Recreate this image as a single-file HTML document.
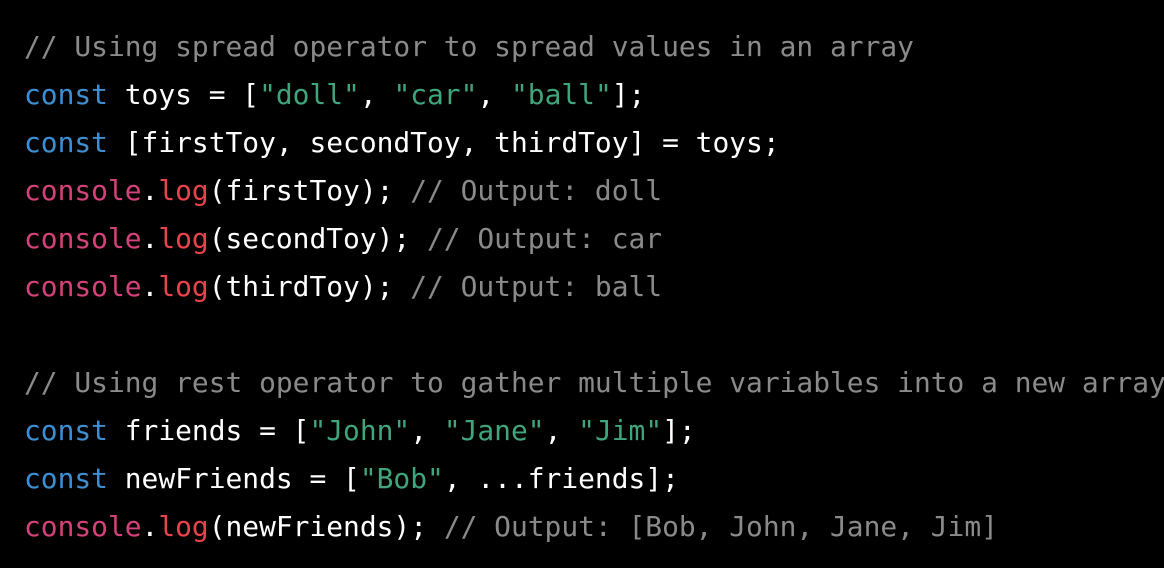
<!DOCTYPE html>
<html><head><meta charset="utf-8"><style>
html,body{margin:0;padding:0;background:#000;width:1164px;height:568px;overflow:hidden}
pre{margin:0;padding:23px 0 0 24px;font-family:"DejaVu Sans Mono","Liberation Mono",monospace;font-size:27.9px;line-height:48px;color:#fff;white-space:pre}
.c{color:#8a8a8a}.k{color:#3d8fd1}.s{color:#3fa57c}.o{color:#d3427a}.l{color:#e9434c}
</style></head><body><pre><span class="c">// Using spread operator to spread values in an array</span>
<span class="k">const</span> toys = [<span class="s">"doll"</span>, <span class="s">"car"</span>, <span class="s">"ball"</span>];
<span class="k">const</span> [firstToy, secondToy, thirdToy] = toys;
<span class="o">console</span>.<span class="l">log</span>(firstToy); <span class="c">// Output: doll</span>
<span class="o">console</span>.<span class="l">log</span>(secondToy); <span class="c">// Output: car</span>
<span class="o">console</span>.<span class="l">log</span>(thirdToy); <span class="c">// Output: ball</span>

<span class="c">// Using rest operator to gather multiple variables into a new array</span>
<span class="k">const</span> friends = [<span class="s">"John"</span>, <span class="s">"Jane"</span>, <span class="s">"Jim"</span>];
<span class="k">const</span> newFriends = [<span class="s">"Bob"</span>, ...friends];
<span class="o">console</span>.<span class="l">log</span>(newFriends); <span class="c">// Output: [Bob, John, Jane, Jim]</span></pre></body></html>
